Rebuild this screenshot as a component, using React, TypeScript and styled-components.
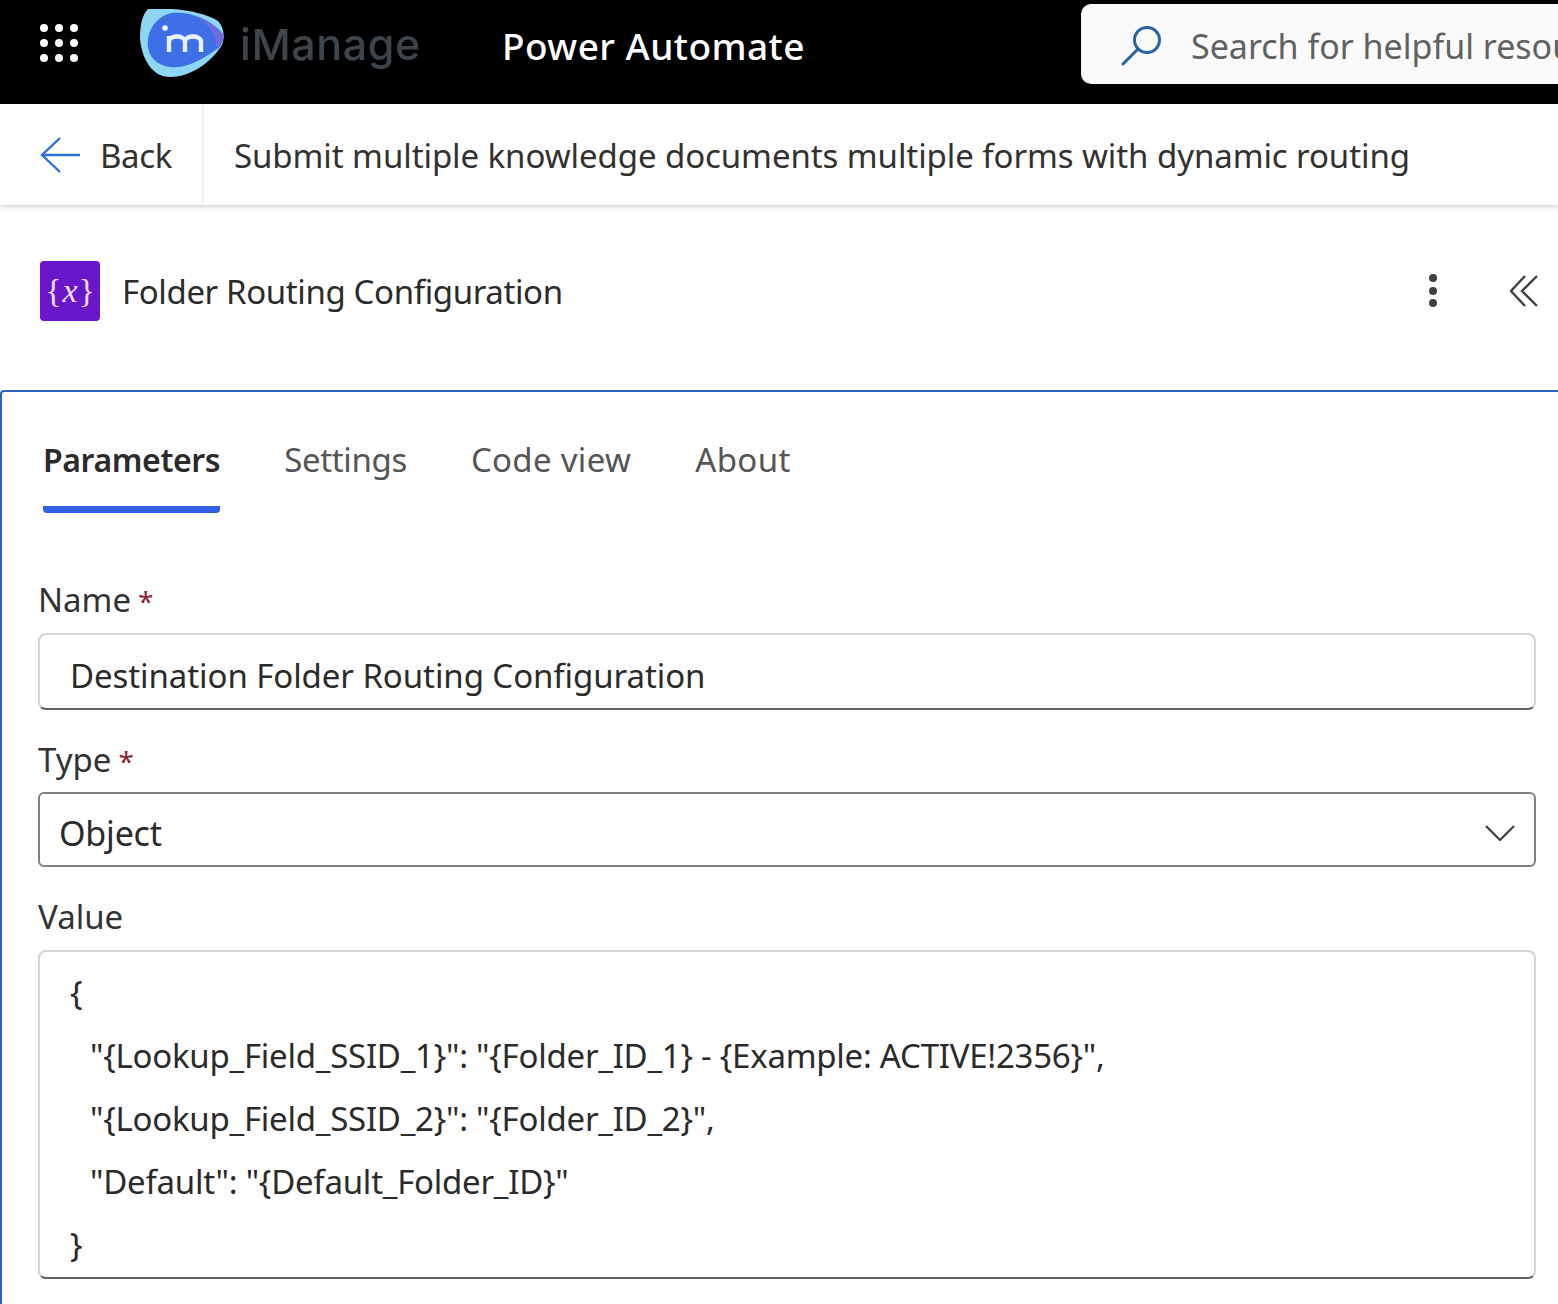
import React from "react";
import styled, { createGlobalStyle } from "styled-components";

const GlobalStyle = createGlobalStyle`
  html, body { margin: 0; padding: 0; background: #fff; }
  body { font-family: "Noto Sans", "Open Sans", sans-serif; color: #2b2b2b; overflow: hidden; }
`;

const Page = styled.div`
  width: 1558px;
  height: 1304px;
  overflow: hidden;
  display: flex;
  flex-direction: column;
`;

const TopBar = styled.header`
  height: 104px;
  flex: none;
  background: #000;
  display: flex;
  align-items: flex-start;
  overflow: hidden;
`;

const Waffle = styled.div`
  margin: 24px 0 0 40px;
  width: 38px;
  display: grid;
  grid-template-columns: repeat(3, 8px);
  justify-content: space-between;
  row-gap: 7px;
  span { width: 8px; height: 8px; border-radius: 50%; background: #fff; }
`;

const Logo = styled.svg`
  margin: 9px 0 0 62px;
  flex: none;
`;

const Brand = styled.div`
  margin: 16px 0 0 14px;
  width: 180px;
  font-family: "Inter", sans-serif;
  font-size: 43px;
  font-weight: 500;
  letter-spacing: 0.6px;
  line-height: 56px;
  color: #3c454c;
  filter: blur(0.7px);
`;

const Product = styled.div`
  margin: 21px 0 0 82px;
  width: 579px;
  flex: none;
  font-size: 37px;
  font-weight: 500;
  line-height: 50px;
  color: #fff;
  letter-spacing: 0.45px;
`;

const Search = styled.div`
  flex: 1;
  height: 80px;
  margin-top: 4px;
  box-sizing: border-box;
  background: #fafafa;
  border-radius: 10px 0 0 10px;
  display: flex;
  align-items: center;
  padding: 3px 0 0 40px;
  white-space: nowrap;
  overflow: hidden;
  font-size: 34px;
  color: #616161;
  gap: 28px;
  svg { flex: none; }
`;

const SubBar = styled.nav`
  height: 101px;
  flex: none;
  display: flex;
  align-items: center;
  background: #fff;
  box-shadow: 0 2px 5px rgba(0, 0, 0, 0.18);
  position: relative;
  font-size: 33px;
  line-height: 47px;
  color: #323130;
`;

const BackButton = styled.div`
  width: 204px;
  height: 100%;
  flex: none;
  box-sizing: border-box;
  border-right: 2px solid #f1f1f1;
  padding-left: 40px;
  display: flex;
  align-items: center;
  gap: 20px;
  letter-spacing: -0.35px;
  span { padding-top: 2px; }
`;

const FlowName = styled.div`
  margin-left: 30px;
  padding-top: 2px;
  white-space: nowrap;
  letter-spacing: -0.08px;
`;

const ActionHeader = styled.div`
  height: 185px;
  flex: none;
  display: flex;
  align-items: center;
  padding: 0 20px 14px 40px;
  box-sizing: border-box;
`;

const ActionIcon = styled.div`
  width: 60px;
  height: 60px;
  flex: none;
  border-radius: 4px;
  background: #6a17c9;
  color: #f0dcf8;
  display: flex;
  align-items: center;
  justify-content: center;
  font-family: "Liberation Serif", serif;
  font-size: 34px;
  i { margin: 0 1px; font-size: 34px; }
`;

const ActionTitle = styled.div`
  flex: 1;
  margin-left: 22px;
  padding-top: 2px;
  font-size: 33px;
  letter-spacing: -0.38px;
  color: #2b2b2b;
`;

const KebabMenu = styled.div`
  display: flex;
  flex-direction: column;
  gap: 4.5px;
  margin-right: 73px;
  span { width: 8px; height: 8px; border-radius: 50%; background: #404040; }
`;

const Panel = styled.section`
  flex: 1;
  border-top: 2px solid #2b63c5;
  border-left: 2px solid #2b63c5;
  border-top-left-radius: 4px;
  padding-left: 36px;
  padding-right: 22px;
`;

const Tabs = styled.div`
  display: flex;
  gap: 64px;
  margin: 44px 0 0 5px;
`;

const Tab = styled.div<{ $active?: boolean; $spacing?: number }>`
  height: 70px;
  font-size: ${(p) => (p.$active ? 32 : 33)}px;
  letter-spacing: ${(p) => p.$spacing ?? 0}px;
  line-height: 48px;
  font-weight: ${(p) => (p.$active ? 600 : 400)};
  color: ${(p) => (p.$active ? "#2b2b2b" : "#555")};
  border-bottom: 7px solid ${(p) => (p.$active ? "#2f62e6" : "transparent")};
  border-radius: 0 0 4px 4px;
`;

const FieldLabel = styled.div<{ $top: number }>`
  margin-top: ${(p) => p.$top}px;
  height: 48px;
  font-size: 33px;
  line-height: 48px;
  color: #333;
  b { font-weight: 400; font-size: 28px; color: #8f2333; margin-left: 7px; }
`;

const TextInput = styled.div`
  height: 77px;
  margin-top: 9px;
  box-sizing: border-box;
  border: 2px solid #d4d4d4;
  border-bottom: 2px solid #616161;
  border-radius: 8px;
  padding-left: 30px;
  font-size: 33px;
  letter-spacing: -0.08px;
  line-height: 82px;
  color: #2b2b2b;
`;

const Select = styled.div`
  height: 75px;
  margin-top: 8px;
  box-sizing: border-box;
  border: 2px solid #808080;
  border-radius: 6px;
  padding: 6px 19px 0 19px;
  display: flex;
  align-items: center;
  justify-content: space-between;
  font-size: 34px;
  letter-spacing: -0.2px;
  color: #2b2b2b;
`;

const CodeArea = styled.div`
  height: 329px;
  margin-top: 9px;
  box-sizing: border-box;
  border: 2px solid #d4d4d4;
  border-bottom: 2px solid #616161;
  border-radius: 8px;
  padding: 9px 0 0 30px;
  font-size: 33px;
  letter-spacing: -0.25px;
  color: #2b2b2b;
  white-space: pre;
`;

const CodeLine = styled.div<{ $indent?: boolean }>`
  height: 63px;
  line-height: 63px;
  padding-left: ${(p) => (p.$indent ? 20 : 0)}px;
`;

const code = [
  "{",
  '"{Lookup_Field_SSID_1}": "{Folder_ID_1} - {Example: ACTIVE!2356}",',
  '"{Lookup_Field_SSID_2}": "{Folder_ID_2}",',
  '"Default": "{Default_Folder_ID}"',
  "}",
];

export default function App() {
  return (
    <Page>
      <GlobalStyle />
      <TopBar>
        <Waffle>
          {Array.from({ length: 9 }).map((_, i) => (
            <span key={i} />
          ))}
        </Waffle>
        <Logo width="86" height="70" viewBox="0 0 86 70">
          <path d="M8 0 C30 -2 62 2 78 12 C84 18 85 28 82 36 C72 52 52 68 30 68 C12 68 2 50 0 30 C0 16 2 6 8 0 Z" fill="#8fd6f5" />
          <path d="M32 4 C48 2 70 10 80 22 C86 30 82 38 74 42 C60 52 44 60 30 58 C14 56 6 44 8 30 C10 16 20 6 32 4 Z" fill="#3f6fe6" />
          <path d="M56 8 C68 12 78 18 84 26 C84 32 80 36 76 38 C78 28 68 14 56 8 Z" fill="#6d6fe0" />
          <circle cx="25" cy="19" r="2.8" fill="#eef6ff" />
          <path d="M29 43 V27 M29 32 C30 26 44 26 45 32 V43 M45 32 C46 26 60 26 61 32 V43" fill="none" stroke="#e8f2ff" strokeWidth="4.4" />
        </Logo>
        <Brand>iManage</Brand>
        <Product>Power Automate</Product>
        <Search>
          <svg width="42" height="42" viewBox="0 0 42 42" fill="none" stroke="#2b62a8" strokeWidth="3">
            <circle cx="26" cy="15" r="12.5" />
            <path d="M17 24 L2 39" strokeLinecap="round" />
          </svg>
          Search for helpful resources
        </Search>
      </TopBar>
      <SubBar>
        <BackButton>
          <svg width="40" height="38" viewBox="0 0 40 38" fill="none" stroke="#2f6fdc" strokeWidth="2.4">
            <path d="M20 2 L2 19 L20 36 M2 19 H40" />
          </svg>
          <span>Back</span>
        </BackButton>
        <FlowName>Submit multiple knowledge documents multiple forms with dynamic routing</FlowName>
      </SubBar>
      <ActionHeader>
        <ActionIcon>
          {"{"}
          <i>x</i>
          {"}"}
        </ActionIcon>
        <ActionTitle>Folder Routing Configuration</ActionTitle>
        <KebabMenu>
          <span />
          <span />
          <span />
        </KebabMenu>
        <svg width="28" height="32" viewBox="0 0 28 32" fill="none" stroke="#404040" strokeWidth="2.4">
          <path d="M15 1 L1 16 L15 31 M27 1 L12 16 L27 31" />
        </svg>
      </ActionHeader>
      <Panel>
        <Tabs>
          <Tab $active $spacing={-0.4}>Parameters</Tab>
          <Tab $spacing={-0.35}>Settings</Tab>
          <Tab $spacing={0.3}>Code view</Tab>
          <Tab $spacing={0.4}>About</Tab>
        </Tabs>
        <FieldLabel $top={63}>
          Name<b>*</b>
        </FieldLabel>
        <TextInput>Destination Folder Routing Configuration</TextInput>
        <FieldLabel $top={26}>
          Type<b>*</b>
        </FieldLabel>
        <Select>
          Object
          <svg width="30" height="16" viewBox="0 0 30 16" fill="none" stroke="#404040" strokeWidth="2.2">
            <path d="M1 1 L15 15 L29 1" />
          </svg>
        </Select>
        <FieldLabel $top={26}>Value</FieldLabel>
        <CodeArea>
          {code.map((line, i) => (
            <CodeLine key={i} $indent={i > 0 && i < code.length - 1}>
              {line}
            </CodeLine>
          ))}
        </CodeArea>
      </Panel>
    </Page>
  );
}
